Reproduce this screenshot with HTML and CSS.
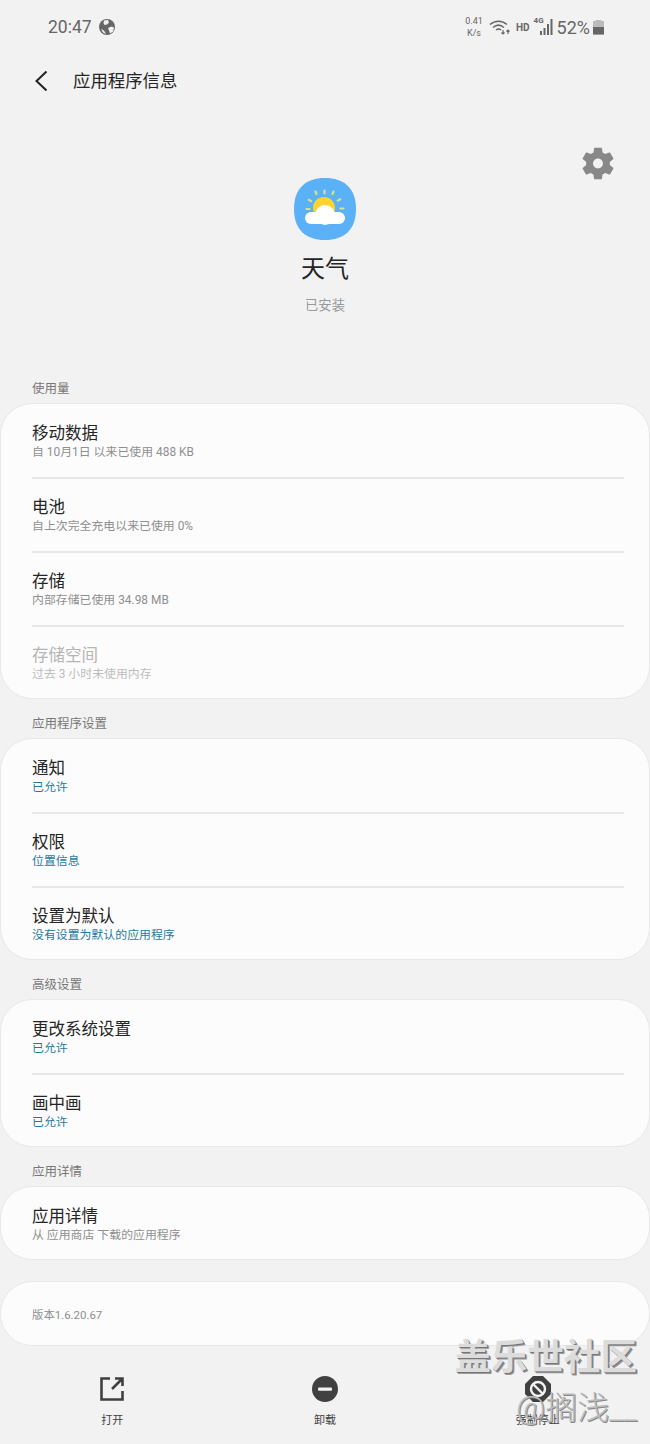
FILE: index.html
```html
<!DOCTYPE html>
<html lang="zh-CN">
<head>
    <meta charset="UTF-8">
    <meta name="viewport" content="width=device-width, initial-scale=1.0">
    <title>应用程序信息</title>
    <link rel="stylesheet" href="styles.css">
</head>
<body>
    <div class="status-bar">
        <div class="status-left">
            <span class="clock">20:47</span>
            <svg class="globe" viewBox="0 0 16 16" width="16" height="16">
                <circle cx="8" cy="8" r="8" fill="#666"/>
                <path d="M5 1.500 9 1l1 2.500-2 2-2.500.5-1-2zM9 9l3.500-1.500 2.500 1-1 4-3 2-1-3zM2 10l3 1.500 2 3.500-3-1.500z" fill="#f2f2f2"/>
            </svg>
        </div>
        <div class="status-right">
            <span class="speed">0.41<br>K/s</span>
            <svg class="wifi" viewBox="0 0 22 16" width="22" height="16" fill="none" stroke="#666" stroke-width="1.500">
                <path d="M1 5.500c5-4.500 12-4.500 17 0M4 8.500c3.500-3 7.500-3 11 0M7 11c2-1.500 3.500-1.500 5 0"/>
                <path d="M9.500 13.500v.1M14 11v4M19 15v-4M17.500 12.500 19 11l1.500 1.500M12.500 13.500 14 15l1.500-1.500" stroke-width="1.200"/>
            </svg>
            <span class="hd">HD</span>
            <span class="signal">
                <span class="lte">4G</span>
                <svg viewBox="0 0 14 18" width="14" height="18" fill="#666">
                    <rect x="0" y="13" width="2" height="4"/>
                    <rect x="3.500" y="10" width="2" height="7"/>
                    <rect x="7" y="6" width="2" height="11"/>
                    <rect x="10.500" y="1" width="2" height="16"/>
                </svg>
            </span>
            <span class="battery-text">52%</span>
            <span class="battery"><span class="battery-fill"></span></span>
        </div>
    </div>

    <div class="app-bar">
        <svg class="back" viewBox="0 0 14 22" width="14" height="22" fill="none" stroke="#222" stroke-width="2">
            <path d="M12.500 1.500 2.500 11l10 9.500"/>
        </svg>
        <span class="app-bar-title">应用程序信息</span>
    </div>

    <div class="hero">
        <div class="hero-main">
            <svg class="app-icon" viewBox="0 0 62 62" width="62" height="62">
                <path d="M31 0C50 0 62 10 62 31S50 62 31 62 0 52 0 31 12 0 31 0z" fill="#5ab1f8"/>
                <g stroke="#d4e38a" stroke-width="2.200" stroke-linecap="round">
                    <path d="M30.500 12.500v3M21.500 13.500l1 2.500M39.500 13.500l-1 2.500M14.800 21.800l2.400 1.400M46.200 21.200l-2.400 1.400M12.500 31h3M46.500 30.500h3"/>
                </g>
                <circle cx="30" cy="30" r="11" fill="#fdd32f"/>
                <circle cx="31" cy="37" r="10" fill="#fff"/>
                <rect x="11" y="34" width="40" height="12" rx="6" fill="#fff"/>
            </svg>
            <div class="app-name">天气</div>
            <div class="app-state">已安装</div>
        </div>
        <svg class="gear" viewBox="2.500 2 19 20" width="32" height="33" fill="#888">
            <path d="M19.140 12.940c.04-.3.06-.61.06-.94 0-.32-.02-.64-.07-.94l2.030-1.580c.18-.14.23-.41.12-.61l-1.920-3.320c-.12-.22-.37-.29-.59-.22l-2.390.96c-.5-.38-1.030-.7-1.620-.94l-.36-2.540c-.04-.24-.24-.41-.48-.41h-3.840c-.24 0-.43.17-.47.41l-.36 2.540c-.59.24-1.130.57-1.620.94l-2.390-.96c-.22-.08-.47 0-.59.22L2.740 8.870c-.12.21-.08.47.12.61l2.030 1.580c-.05.3-.09.63-.09.94s.02.64.07.94l-2.030 1.580c-.18.14-.23.41-.12.61l1.920 3.320c.12.22.37.29.59.22l2.390-.96c.5.38 1.030.7 1.620.94l.36 2.540c.05.24.24.41.48.41h3.840c.24 0 .44-.17.47-.41l.36-2.540c.59-.24 1.130-.56 1.620-.94l2.390.96c.22.08.47 0 .59-.22l1.920-3.320c.12-.22.07-.47-.12-.61l-2.010-1.580zM12 15c-1.650 0-3-1.350-3-3s1.350-3 3-3 3 1.350 3 3-1.350 3-3 3z"/>
        </svg>
    </div>

    <div class="section-label">使用量</div>
    <div class="card">
        <div class="row">
            <div class="row-title">移动数据</div>
            <div class="row-sub">自 10月1日 以来已使用 488 KB</div>
        </div>
        <div class="row">
            <div class="row-title">电池</div>
            <div class="row-sub">自上次完全充电以来已使用 0%</div>
        </div>
        <div class="row">
            <div class="row-title">存储</div>
            <div class="row-sub">内部存储已使用 34.98 MB</div>
        </div>
        <div class="row disabled">
            <div class="row-title">存储空间</div>
            <div class="row-sub">过去 3 小时未使用内存</div>
        </div>
    </div>

    <div class="section-label">应用程序设置</div>
    <div class="card">
        <div class="row">
            <div class="row-title">通知</div>
            <div class="row-sub blue">已允许</div>
        </div>
        <div class="row">
            <div class="row-title">权限</div>
            <div class="row-sub blue">位置信息</div>
        </div>
        <div class="row">
            <div class="row-title">设置为默认</div>
            <div class="row-sub blue">没有设置为默认的应用程序</div>
        </div>
    </div>

    <div class="section-label">高级设置</div>
    <div class="card">
        <div class="row">
            <div class="row-title">更改系统设置</div>
            <div class="row-sub blue">已允许</div>
        </div>
        <div class="row">
            <div class="row-title">画中画</div>
            <div class="row-sub blue">已允许</div>
        </div>
    </div>

    <div class="section-label">应用详情</div>
    <div class="card">
        <div class="row">
            <div class="row-title">应用详情</div>
            <div class="row-sub">从 应用商店 下载的应用程序</div>
        </div>
    </div>

    <div class="card version-card">
        <span class="version">版本1.6.20.67</span>
    </div>

    <div class="bottom-bar">
        <div class="action">
            <svg viewBox="0 0 24 24" width="24" height="24" fill="none" stroke="#404040" stroke-width="2.600">
                <path d="M10 1.500H1.500v21h21V14M15 1.500h7.500V9M22 2 12 12"/>
            </svg>
            <span>打开</span>
        </div>
        <div class="action">
            <svg viewBox="0 0 26 26" width="26" height="26">
                <circle cx="13" cy="13" r="13" fill="#404040"/>
                <rect x="6" y="11.500" width="14" height="3.200" rx="1" fill="#f2f2f2"/>
            </svg>
            <span>卸载</span>
        </div>
        <div class="action">
            <svg viewBox="0 0 26 26" width="26" height="26">
                <path d="M8 0h10l8 8v10l-8 8H8l-8-8V8z" fill="#404040"/>
                <circle cx="13" cy="13" r="7" fill="none" stroke="#f2f2f2" stroke-width="2.400"/>
                <path d="m8 8 10 10" stroke="#f2f2f2" stroke-width="2.400"/>
            </svg>
            <span>强制停止</span>
        </div>
    </div>

    <div class="watermark">
        <div class="wm-site">盖乐世社区</div>
        <div class="wm-user">@搁浅__</div>
    </div>
</body>
</html>
```

FILE: styles.css
```css
* {
    box-sizing: border-box;
}
html, body {
    margin: 0;
    padding: 0;
}
body {
    position: relative;
    width: 650px;
    height: 1444px;
    overflow: hidden;
    background-color: #f2f2f2;
    color: #252525;
    font-family: Roboto, "Noto Sans CJK SC", sans-serif;
}
.status-bar {
    display: flex;
    justify-content: space-between;
    align-items: center;
    height: 54px;
    padding: 0 46px 0 48px;
    color: #666;
}
.status-left {
    display: flex;
    align-items: center;
    gap: 7px;
}
.clock {
    font-size: 17.500px;
}
.status-right {
    display: flex;
    align-items: center;
}
.speed {
    width: 20px;
    margin-right: 5px;
    font-size: 9px;
    line-height: 12px;
    text-align: center;
}
.wifi {
    margin-right: 5px;
}
.hd {
    margin-right: 6px;
    font-size: 10px;
    font-weight: 700;
}
.signal {
    display: flex;
    align-items: flex-end;
    position: relative;
    width: 18px;
    margin-right: 3px;
    justify-content: flex-end;
}
.lte {
    position: absolute;
    left: -2px;
    top: -2px;
    font-size: 8px;
    font-weight: 700;
}
.battery-text {
    margin-right: 3px;
    font-size: 18px;
}
.battery {
    display: flex;
    align-items: flex-end;
    width: 11px;
    height: 15px;
    background-color: #bbb;
    border-radius: 2px 2px 1px 1px;
    clip-path: polygon(25% 0, 75% 0, 75% 10%, 100% 10%, 100% 100%, 0 100%, 0 10%, 25% 10%);
}
.battery-fill {
    width: 100%;
    height: 8px;
    background-color: #666;
}
.app-bar {
    display: flex;
    align-items: center;
    height: 54px;
    padding: 0 0 1px 34px;
}
.back {
    margin-right: 25px;
}
.app-bar-title {
    font-size: 17.400px;
    line-height: 24px;
}
.hero {
    display: grid;
    grid-template-columns: 1fr auto 1fr;
    height: 261px;
    padding-top: 39px;
}
.hero-main {
    grid-column: 2;
    display: flex;
    flex-direction: column;
    align-items: center;
    padding-top: 31px;
}
.gear {
    grid-column: 3;
    justify-self: end;
    margin-right: 36px;
}
.app-name {
    margin-top: 11px;
    font-size: 24px;
    line-height: 36px;
}
.app-state {
    margin-top: 9px;
    color: #999;
    font-size: 13.300px;
    line-height: 20px;
}
.section-label {
    height: 34px;
    padding: 11px 0 0 32px;
    color: #777;
    font-size: 12.500px;
    line-height: 18px;
}
.card {
    margin-bottom: 5px;
    background-color: #fcfcfc;
    border: 1px solid #e8e8e8;
    border-radius: 32px;
    overflow: hidden;
}
.row {
    height: 74px;
    margin: 0 25px 0 31px;
    padding-top: 16px;
    border-top: 2px solid #e8e8e8;
}
.row:first-child {
    height: 73px;
    padding-top: 17px;
    border-top: none;
}
.row:last-child {
    height: 73px;
}
.row:only-child {
    height: 72px;
}
.row-title {
    font-size: 16.500px;
    line-height: 25px;
}
.row-sub {
    color: #8f8f8f;
    font-size: 11.900px;
    line-height: 12px;
}
.blue {
    color: #1f7a9e;
}
.disabled .row-title {
    color: #b5b5b5;
}
.disabled .row-sub {
    color: #bdbdbd;
}
.version-card {
    display: flex;
    align-items: center;
    height: 65px;
    margin-top: 21px;
    margin-bottom: 0;
    padding-left: 31px;
}
.version {
    color: #8f8f8f;
    font-size: 11.400px;
}
.bottom-bar {
    display: grid;
    grid-template-columns: repeat(3, 1fr);
    padding: 30px 6px 0;
}
.action {
    display: flex;
    flex-direction: column;
    align-items: center;
    height: 70px;
    color: #404040;
    font-size: 11px;
    line-height: 16px;
}
.action svg {
    margin-bottom: 11px;
}
.action:first-child svg {
    margin-top: 1px;
    margin-bottom: 12px;
}
.watermark {
    position: absolute;
    right: 13px;
    top: 1335px;
    text-align: right;
    pointer-events: none;
    color: #dcdcdc;
}
.wm-site {
    font-size: 36.500px;
    font-weight: 700;
    line-height: 46px;
    text-shadow: 1px 1px 0 #777, 2px 2px 0 #999;
}
.wm-user {
    margin-top: 8px;
    font-size: 32px;
    font-weight: 300;
    line-height: 38px;
    color: #bbb;
    text-shadow: 1px 1px 0 #888;
}
```
